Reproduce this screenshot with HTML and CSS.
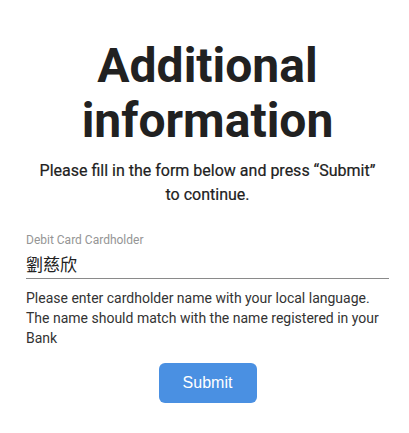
FILE: index.html
```html
<!DOCTYPE html>
<html>
<head>
<meta charset="utf-8">
<link rel="stylesheet" href="styles.css">
</head>
<body>
<main class="page">
  <h1 class="title">Additional information</h1>
  <p class="subtitle">Please fill in the form below and press “Submit” to continue.</p>
  <form class="form">
    <div class="field">
      <label class="label">Debit Card Cardholder</label>
      <div class="value">劉慈欣</div>
    </div>
    <p class="helper">Please enter cardholder name with your local language. The name should match with the name registered in your Bank</p>
    <div class="actions">
      <button type="button" class="submit">Submit</button>
    </div>
  </form>
</main>
</body>
</html>
```
FILE: styles.css
```css
html, body {
  margin: 0;
  padding: 0;
  background: #fff;
}
body {
  font-family: Roboto, "Noto Sans CJK TC", sans-serif;
  color: #212121;
}
.page {
  padding: 38px 20px 0 26px;
  display: flex;
  flex-direction: column;
}
.title {
  margin: 0 auto;
  font-size: 48px;
  line-height: 55px;
  font-weight: 700;
  text-align: center;
  width: 260px;
  color: #212121;
}
.subtitle {
  margin: 11px 0 0;
  padding: 0 6px;
  font-size: 16px;
  line-height: 24px;
  font-weight: 400;
  -webkit-text-stroke: 0.2px #212121;
  text-align: center;
  color: #212121;
}
.form {
  margin-top: 25px;
  display: flex;
  flex-direction: column;
}
.field {
  display: flex;
  flex-direction: column;
  border-bottom: 1px solid #8a8a8a;
}
.label {
  font-size: 12px;
  line-height: 16px;
  color: #959595;
}
.value {
  font-size: 17px;
  line-height: 24px;
  padding: 4px 0 2px;
  font-family: "Noto Sans CJK TC", sans-serif;
  color: #212121;
}
.helper {
  margin: 9px 0 0;
  font-size: 14px;
  line-height: 20px;
  color: #333;
}
.actions {
  display: flex;
  justify-content: center;
  margin-top: 15px;
}
.submit {
  width: 98px;
  height: 40px;
  border: none;
  border-radius: 6px;
  background: #4a90e2;
  color: #fff;
  font-family: "Liberation Sans", Arial, sans-serif;
  font-size: 16px;
}
```
